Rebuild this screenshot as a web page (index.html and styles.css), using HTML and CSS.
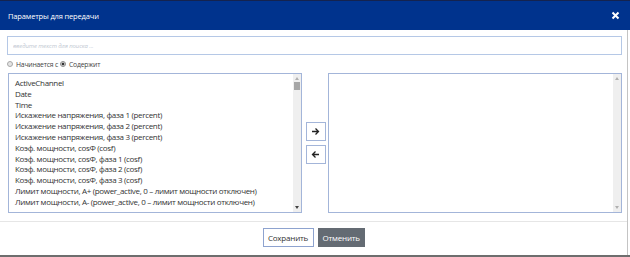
FILE: index.html
```html
<!DOCTYPE html>
<html>
<head>
    <title>Параметры для передачи</title>
    <link rel="stylesheet" href="styles.css">
</head>
<body>
    <div class="screen">
        <div class="modal">
            <div class="modal-header">
                <span class="modal-title">Параметры для передачи</span>
                <svg class="close" width="9" height="9" viewBox="0 0 9 9"><path d="M1.5 1.5L7.5 7.5M7.5 1.5L1.5 7.5" stroke="#fff" stroke-width="2"/></svg>
            </div>
            <div class="modal-body">
                <input type="text" class="search" placeholder="введите текст для поиска ...">
                <div class="mode">
                    <label class="radio"><span class="dot"></span>Начинается с</label>
                    <label class="radio"><span class="dot checked"></span>Содержит</label>
                </div>
                <div class="picker">
                    <div class="listbox left">
                        <div class="items">
                            <div>ActiveChannel</div>
                            <div>Date</div>
                            <div>Time</div>
                            <div>Искажение напряжения, фаза 1 (percent)</div>
                            <div>Искажение напряжения, фаза 2 (percent)</div>
                            <div>Искажение напряжения, фаза 3 (percent)</div>
                            <div>Коэф. мощности, cosФ (cosf)</div>
                            <div>Коэф. мощности, cosФ, фаза 1 (cosf)</div>
                            <div>Коэф. мощности, cosФ, фаза 2 (cosf)</div>
                            <div>Коэф. мощности, cosФ, фаза 3 (cosf)</div>
                            <div>Лимит мощности, A+ (power_active, 0 – лимит мощности отключен)</div>
                            <div>Лимит мощности, A- (power_active, 0 – лимит мощности отключен)</div>
                        </div>
                        <div class="scrollbar">
                            <span class="arrow up"></span>
                            <span class="thumb"></span>
                            <span class="arrow down dark"></span>
                        </div>
                    </div>
                    <div class="moves">
                        <button class="move">
                            <svg width="9" height="9" viewBox="0 0 9 9"><path d="M1 4.5H7.5M4.5 1.5L7.5 4.5L4.5 7.5" fill="none" stroke="#222" stroke-width="1.3"/></svg>
                        </button>
                        <button class="move">
                            <svg width="9" height="9" viewBox="0 0 9 9"><path d="M8 4.5H1.5M4.5 1.5L1.5 4.5L4.5 7.5" fill="none" stroke="#222" stroke-width="1.3"/></svg>
                        </button>
                    </div>
                    <div class="listbox right">
                        <div class="items"></div>
                        <div class="scrollbar">
                            <span class="arrow up"></span>
                            <span class="arrow down"></span>
                        </div>
                    </div>
                </div>
            </div>
            <div class="modal-footer">
                <button class="btn save">Сохранить</button>
                <button class="btn cancel">Отменить</button>
            </div>
        </div>
        <div class="shade"></div>
    </div>
</body>
</html>
```

FILE: styles.css
```css
body {
    margin: 0;
    font-family: "Open Sans", "Noto Sans", sans-serif;
    background-color: #fff;
}
.screen {
    width: 630px;
    height: 257px;
    display: flex;
    flex-direction: column;
    overflow: hidden;
}
.modal {
    width: 627px;
    height: 255px;
    border-right: 1px solid #c4c4c4;
    display: flex;
    flex-direction: column;
    background-color: #fff;
}
.shade {
    height: 2px;
    background-color: #6e6e6e;
}
.modal-header {
    height: 29px;
    border-top: 1px solid #14234f;
    background-color: #00338d;
    color: #fff;
    display: flex;
    align-items: center;
    justify-content: space-between;
    padding: 0 10px 0 8px;
    margin-right: -3px;
}
.modal-title {
    font-size: 7.5px;
    letter-spacing: -0.15px;
}
.modal-body {
    padding: 6px 5px 0 7px;
    display: flex;
    flex-direction: column;
}
.search {
    box-sizing: border-box;
    width: 615px;
    height: 19px;
    border: 1px solid #b5c8e6;
    padding: 0 5px;
    font-family: inherit;
    font-size: 6px;
    outline: none;
}
.search::placeholder {
    color: #c2c8d2;
    font-style: italic;
    letter-spacing: -0.1px;
}
.mode {
    display: flex;
    gap: 2px;
    height: 18px;
    align-items: center;
    font-size: 6.8px;
    letter-spacing: -0.2px;
    color: #444;
}
.radio {
    display: flex;
    align-items: center;
    gap: 3px;
}
.dot {
    box-sizing: border-box;
    width: 6px;
    height: 6px;
    border-radius: 50%;
    border: 1px solid #a8a8a8;
    background-color: #e4e4e4;
}
.dot.checked {
    background: radial-gradient(circle, #333 0 1.2px, #e8e8e8 1.7px);
    border-color: #8a8a8a;
}
.picker {
    display: flex;
    align-items: center;
    height: 140px;
}
.listbox {
    box-sizing: border-box;
    height: 140px;
    border: 1px solid #a3b5d9;
    display: flex;
}
.listbox.left {
    width: 294px;
    margin-left: 1px;
}
.listbox.right {
    width: 294px;
}
.items {
    flex: 1;
    overflow: hidden;
    padding: 4px 0 0 6px;
    font-size: 8px;
    letter-spacing: -0.32px;
    line-height: 10.8px;
    color: #333;
    white-space: nowrap;
}
.scrollbar {
    width: 8px;
    background-color: #efefef;
    display: flex;
    flex-direction: column;
    align-items: center;
    padding: 3px 0;
    box-sizing: border-box;
}
.arrow {
    width: 0;
    height: 0;
    border-left: 2.5px solid transparent;
    border-right: 2.5px solid transparent;
}
.arrow.up {
    border-bottom: 3px solid #b0b0b0;
}
.arrow.down {
    margin-top: auto;
    border-top: 3px solid #b0b0b0;
}
.arrow.down.dark {
    border-top-color: #444;
}
.thumb {
    width: 6px;
    height: 8px;
    margin-top: 2px;
    background-color: #a6a6a6;
}
.moves {
    width: 27px;
    display: flex;
    flex-direction: column;
    align-items: center;
    gap: 4px;
    padding-left: 2px;
    box-sizing: border-box;
}
.move {
    width: 20px;
    height: 19px;
    padding: 0;
    border: 1px solid #a3b5d9;
    background-color: #fff;
    display: flex;
    align-items: center;
    justify-content: center;
}
.modal-footer {
    margin-top: 8px;
    border-top: 1px solid #e6e6e6;
    padding-top: 6px;
    display: flex;
    justify-content: center;
    gap: 4px;
}
.btn {
    height: 19px;
    padding: 0 4px;
    font-family: inherit;
    font-size: 8px;
    letter-spacing: -0.2px;
    border: 1px solid #8ea3cf;
}
.save {
    width: 51px;
    background-color: #fff;
    color: #333;
}
.cancel {
    width: 47px;
    background-color: #646b73;
    border-color: #646b73;
    color: #fff;
}
```
